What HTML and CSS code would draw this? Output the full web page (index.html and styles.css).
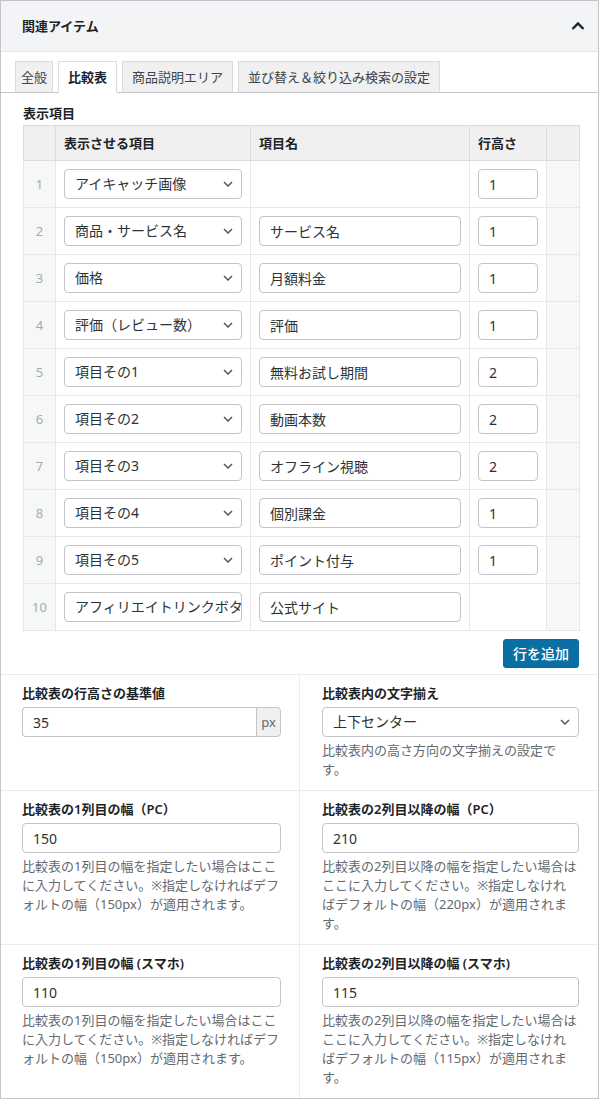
FILE: index.html
```html
<!DOCTYPE html>
<html lang="ja">
<head>
<meta charset="utf-8">
<title>関連アイテム</title>
<link rel="stylesheet" href="styles.css">
</head>
<body>
<div class="postbox">
  <div class="postbox-header">
    <h2 class="title">関連アイテム</h2>
    <svg class="toggle" width="14" height="10" viewBox="0 0 14 10"><polyline points="1.5,8 7,2.5 12.5,8"/></svg>
  </div>

  <div class="tabs">
    <span class="tab narrow">全般</span>
    <span class="tab active">比較表</span>
    <span class="tab">商品説明エリア</span>
    <span class="tab">並び替え＆絞り込み検索の設定</span>
  </div>

  <div class="panel">
    <div class="field-label">表示項目</div>
    <table class="items">
      <colgroup>
        <col class="c-num"><col class="c-sel"><col class="c-name"><col class="c-h"><col class="c-x">
      </colgroup>
      <thead>
        <tr><th class="num"></th><th>表示させる項目</th><th>項目名</th><th>行高さ</th><th class="extra"></th></tr>
      </thead>
      <tbody>
        <tr>
          <td class="num">1</td>
          <td><div class="select"><span class="select-text">アイキャッチ画像</span><svg class="caret" width="10" height="6" viewBox="0 0 10 6"><polyline points="1,1 5,5 9,1"/></svg></div></td>
          <td></td>
          <td><input class="input" type="text" value="1"></td>
          <td class="extra"></td>
        </tr>
        <tr>
          <td class="num">2</td>
          <td><div class="select"><span class="select-text">商品・サービス名</span><svg class="caret" width="10" height="6" viewBox="0 0 10 6"><polyline points="1,1 5,5 9,1"/></svg></div></td>
          <td><input class="input" type="text" value="サービス名"></td>
          <td><input class="input" type="text" value="1"></td>
          <td class="extra"></td>
        </tr>
        <tr>
          <td class="num">3</td>
          <td><div class="select"><span class="select-text">価格</span><svg class="caret" width="10" height="6" viewBox="0 0 10 6"><polyline points="1,1 5,5 9,1"/></svg></div></td>
          <td><input class="input" type="text" value="月額料金"></td>
          <td><input class="input" type="text" value="1"></td>
          <td class="extra"></td>
        </tr>
        <tr>
          <td class="num">4</td>
          <td><div class="select"><span class="select-text">評価（レビュー数）</span><svg class="caret" width="10" height="6" viewBox="0 0 10 6"><polyline points="1,1 5,5 9,1"/></svg></div></td>
          <td><input class="input" type="text" value="評価"></td>
          <td><input class="input" type="text" value="1"></td>
          <td class="extra"></td>
        </tr>
        <tr>
          <td class="num">5</td>
          <td><div class="select"><span class="select-text">項目その1</span><svg class="caret" width="10" height="6" viewBox="0 0 10 6"><polyline points="1,1 5,5 9,1"/></svg></div></td>
          <td><input class="input" type="text" value="無料お試し期間"></td>
          <td><input class="input" type="text" value="2"></td>
          <td class="extra"></td>
        </tr>
        <tr>
          <td class="num">6</td>
          <td><div class="select"><span class="select-text">項目その2</span><svg class="caret" width="10" height="6" viewBox="0 0 10 6"><polyline points="1,1 5,5 9,1"/></svg></div></td>
          <td><input class="input" type="text" value="動画本数"></td>
          <td><input class="input" type="text" value="2"></td>
          <td class="extra"></td>
        </tr>
        <tr>
          <td class="num">7</td>
          <td><div class="select"><span class="select-text">項目その3</span><svg class="caret" width="10" height="6" viewBox="0 0 10 6"><polyline points="1,1 5,5 9,1"/></svg></div></td>
          <td><input class="input" type="text" value="オフライン視聴"></td>
          <td><input class="input" type="text" value="2"></td>
          <td class="extra"></td>
        </tr>
        <tr>
          <td class="num">8</td>
          <td><div class="select"><span class="select-text">項目その4</span><svg class="caret" width="10" height="6" viewBox="0 0 10 6"><polyline points="1,1 5,5 9,1"/></svg></div></td>
          <td><input class="input" type="text" value="個別課金"></td>
          <td><input class="input" type="text" value="1"></td>
          <td class="extra"></td>
        </tr>
        <tr>
          <td class="num">9</td>
          <td><div class="select"><span class="select-text">項目その5</span><svg class="caret" width="10" height="6" viewBox="0 0 10 6"><polyline points="1,1 5,5 9,1"/></svg></div></td>
          <td><input class="input" type="text" value="ポイント付与"></td>
          <td><input class="input" type="text" value="1"></td>
          <td class="extra"></td>
        </tr>
        <tr>
          <td class="num">10</td>
          <td><div class="select long"><span class="select-text">アフィリエイトリンクボタン</span></div></td>
          <td><input class="input" type="text" value="公式サイト"></td>
          <td></td>
          <td class="extra"></td>
        </tr>
      </tbody>
    </table>
    <div class="actions"><button class="btn" type="button">行を追加</button></div>
  </div>

  <div class="settings">
    <div class="srow">
      <div class="scell left">
        <div class="slabel">比較表の行高さの基準値</div>
        <div class="input-group">
          <input class="input grouped" type="text" value="35">
          <span class="addon">px</span>
        </div>
      </div>
      <div class="scell right">
        <div class="slabel">比較表内の文字揃え</div>
        <div class="select"><span class="select-text">上下センター</span><svg class="caret" width="10" height="6" viewBox="0 0 10 6"><polyline points="1,1 5,5 9,1"/></svg></div>
        <p class="desc">比較表内の高さ方向の文字揃えの設定です。</p>
      </div>
    </div>
    <div class="srow">
      <div class="scell left">
        <div class="slabel">比較表の1列目の幅（PC）</div>
        <input class="input" type="text" value="150">
        <p class="desc">比較表の1列目の幅を指定したい場合はここに入力してください。※指定しなければデフォルトの幅（150px）が適用されます。</p>
      </div>
      <div class="scell right">
        <div class="slabel">比較表の2列目以降の幅（PC）</div>
        <input class="input" type="text" value="210">
        <p class="desc">比較表の2列目以降の幅を指定したい場合はここに入力してください。※指定しなければデフォルトの幅（220px）が適用されます。</p>
      </div>
    </div>
    <div class="srow">
      <div class="scell left">
        <div class="slabel">比較表の1列目の幅 (スマホ)</div>
        <input class="input" type="text" value="110">
        <p class="desc">比較表の1列目の幅を指定したい場合はここに入力してください。※指定しなければデフォルトの幅（150px）が適用されます。</p>
      </div>
      <div class="scell right">
        <div class="slabel">比較表の2列目以降の幅 (スマホ)</div>
        <input class="input" type="text" value="115">
        <p class="desc">比較表の2列目以降の幅を指定したい場合はここに入力してください。※指定しなければデフォルトの幅（115px）が適用されます。</p>
      </div>
    </div>
  </div>
</div>
</body>
</html>
```

FILE: styles.css
```css
* { box-sizing: border-box; }

body {
  margin: 0;
  background: #fff;
  font-family: "Noto Sans", "Noto Sans CJK JP", sans-serif;
  font-size: 13px;
  line-height: 20px;
  color: #1d2327;
}

.postbox {
  width: 599px;
  border: 1px solid #c3c4c7;
  background: #fff;
}

.postbox-header {
  height: 51px;
  display: flex;
  align-items: center;
  justify-content: space-between;
  padding: 0 13px 0 21px;
  background: #f3f4f5;
  border-bottom: 1px solid #e2e4e7;
}

.title {
  margin: 0;
  font-size: 13px;
  font-weight: 600;
  line-height: 20px;
  color: #1d2327;
}

.toggle polyline {
  fill: none;
  stroke: #1d2327;
  stroke-width: 2.4;
}

.tabs {
  display: flex;
  gap: 5px;
  padding: 9px 0 0 14px;
  border-bottom: 1px solid #c3c4c7;
}

.tab {
  height: 32px;
  line-height: 30px;
  padding: 0 9px;
  margin-bottom: -1px;
  border: 1px solid #dcdcde;
  border-bottom-color: #c3c4c7;
  background: #f0f0f1;
  color: #3c434a;
  font-size: 13px;
  white-space: nowrap;
}

.tab.narrow {
  padding: 0 5px;
}

.tab.active {
  background: #fff;
  border-bottom-color: #fff;
  color: #1d2327;
  font-weight: 600;
}

.panel {
  padding: 10px 19px 6px 22px;
}

.field-label {
  font-weight: 600;
  line-height: 20px;
  margin-bottom: 2px;
}

.items {
  width: 556px;
  table-layout: fixed;
  border-collapse: collapse;
  border: 1px solid #dcdcde;
}

.c-num { width: 32px; }
.c-sel { width: 195px; }
.c-name { width: 219px; }
.c-h { width: 77px; }
.c-x { width: 33px; }

.items th,
.items td {
  border: 1px solid #e6e7e8;
  padding: 0 8px;
  text-align: left;
  vertical-align: middle;
}

.items thead tr { height: 35px; }
.items tbody tr { height: 47px; }

.items th {
  background: #f0f0f1;
  border-color: #dcdcde;
  font-weight: 600;
  font-size: 13px;
  color: #1d2327;
}

.items td.num {
  padding: 0;
  text-align: center;
  color: #a7aaad;
  background: #f6f7f7;
  font-size: 13px;
}

.items th.num { padding: 0; }

.items td.extra { background: #f6f7f7; }
.items th.extra { background: #f0f0f1; }

.select {
  display: flex;
  align-items: center;
  justify-content: space-between;
  height: 30px;
  padding: 0 8px 0 10px;
  border: 1px solid #c3c4c7;
  border-radius: 4px;
  background: #fff;
  font-size: 14px;
  color: #2c3338;
  overflow: hidden;
}

.select-text {
  white-space: nowrap;
  overflow: hidden;
}

.select.long { padding-right: 0; }

.caret {
  flex: none;
}

.caret polyline {
  fill: none;
  stroke: #50575e;
  stroke-width: 1.5;
}

.input {
  display: block;
  width: 100%;
  height: 30px;
  margin: 0;
  padding: 0 10px;
  border: 1px solid #c3c4c7;
  border-radius: 4px;
  background: #fff;
  font-family: inherit;
  font-size: 14px;
  color: #2c3338;
  outline: none;
}

.actions {
  display: flex;
  justify-content: flex-end;
  margin-top: 8px;
}

.btn {
  height: 29px;
  padding: 0 9px;
  border: 1px solid #0a6a9c;
  border-radius: 3px;
  background: #0a6fa3;
  color: #fff;
  font-family: inherit;
  font-size: 14px;
  font-weight: 500;
  line-height: 27px;
}

.srow {
  display: grid;
  grid-template-columns: 299px 298px;
  border-top: 1px solid #ececec;
}

.scell {
  padding: 8px 19px 11px 21px;
}

.scell.left {
  border-right: 1px solid #ececec;
  padding-right: 18px;
}

.scell.right {
  padding-left: 22px;
}

.slabel {
  font-weight: 600;
  line-height: 20px;
  margin-bottom: 4px;
  color: #1d2327;
}

.input-group {
  display: flex;
  height: 30px;
}

.input.grouped {
  flex: 1;
  border-radius: 4px 0 0 4px;
  border-right: none;
}

.addon {
  width: 25px;
  display: flex;
  align-items: center;
  justify-content: center;
  border: 1px solid #c3c4c7;
  border-radius: 0 4px 4px 0;
  background: #f0f0f1;
  color: #646970;
  font-size: 13px;
}

.desc {
  margin: 4px 0 0;
  color: #646970;
  line-height: 19px;
  font-size: 13px;
}
```
